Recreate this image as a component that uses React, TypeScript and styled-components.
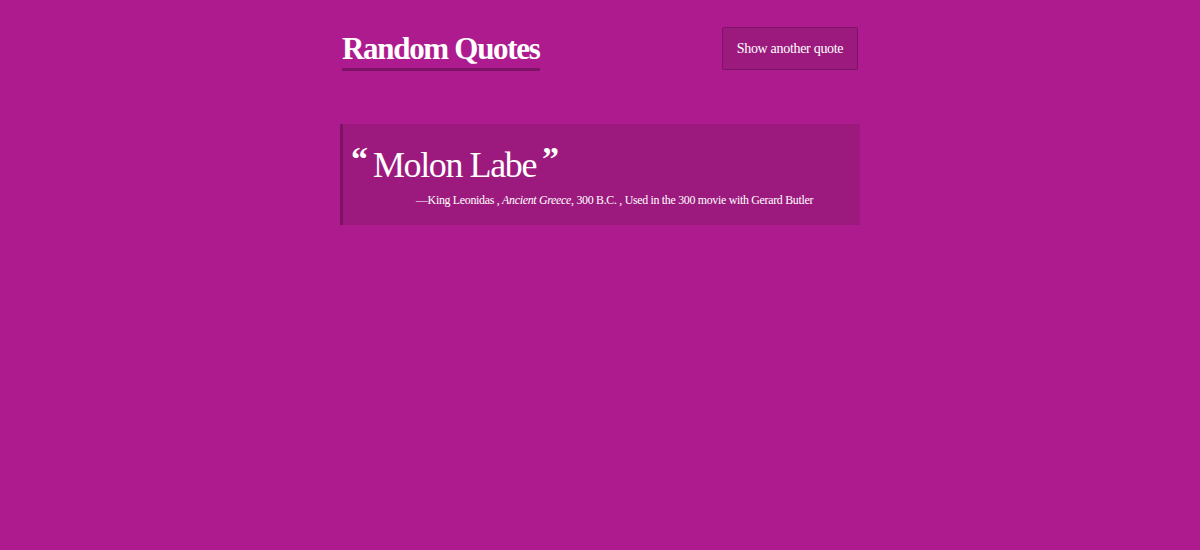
import React from "react";
import styled, { createGlobalStyle } from "styled-components";

const Global = createGlobalStyle`
  html, body { margin: 0; padding: 0; background: #ad1b8e; }
  body { font-family: "Liberation Serif", "DejaVu Serif", serif; color: #fff; min-height: 550px; }
`;

const Page = styled.div`
  width: 520px;
  margin: 0 auto;
  padding-top: 27px;
`;

const Header = styled.header`
  display: flex;
  justify-content: space-between;
  align-items: flex-start;
  padding: 0 2px;
  height: 97px;
`;

const Title = styled.h1`
  margin: 4px 0 0;
  font-size: 31px;
  font-weight: 700;
  line-height: 36px;
  letter-spacing: -1.3px;
  padding-bottom: 1px;
  border-bottom: 3px solid #7b1467;
`;

const Button = styled.button`
  font-family: inherit;
  color: #fff;
  font-size: 14px;
  letter-spacing: -0.3px;
  background: #9c1a7e;
  border: 1px solid #7b1467;
  border-radius: 2px;
  width: 136px;
  height: 43px;
  padding: 0;
  cursor: pointer;
`;

const QuoteBox = styled.blockquote`
  margin: 0;
  background: #9c1a7e;
  border-left: 3px solid #7b1467;
  height: 101px;
  padding: 15px 0 0 8px;
  box-sizing: border-box;
`;

const QuoteText = styled.p`
  margin: 0;
  font-size: 36px;
  line-height: 40px;
  letter-spacing: -1.4px;
`;

const Mark = styled.span<{ $side: "open" | "close" }>`
  font-size: 34px;
  font-weight: 700;
  letter-spacing: 0;
  vertical-align: 7px;
  margin: ${(p) => (p.$side === "open" ? "0 5px 0 0" : "0 0 0 6px")};
`;

const Cite = styled.p`
  margin: 7px 0 0 65px;
  font-size: 11.9px;
  line-height: 16px;
  letter-spacing: -0.3px;
  white-space: nowrap;
`;

export default function App() {
  return (
    <>
      <Global />
      <Page>
        <Header>
          <Title>Random Quotes</Title>
          <Button>Show another quote</Button>
        </Header>
        <QuoteBox>
          <QuoteText>
            <Mark $side="open">“</Mark>Molon Labe<Mark $side="close">”</Mark>
          </QuoteText>
          <Cite>
            —King Leonidas , <i>Ancient Greece</i>, 300 B.C. , Used in the 300 movie with Gerard Butler
          </Cite>
        </QuoteBox>
      </Page>
    </>
  );
}
